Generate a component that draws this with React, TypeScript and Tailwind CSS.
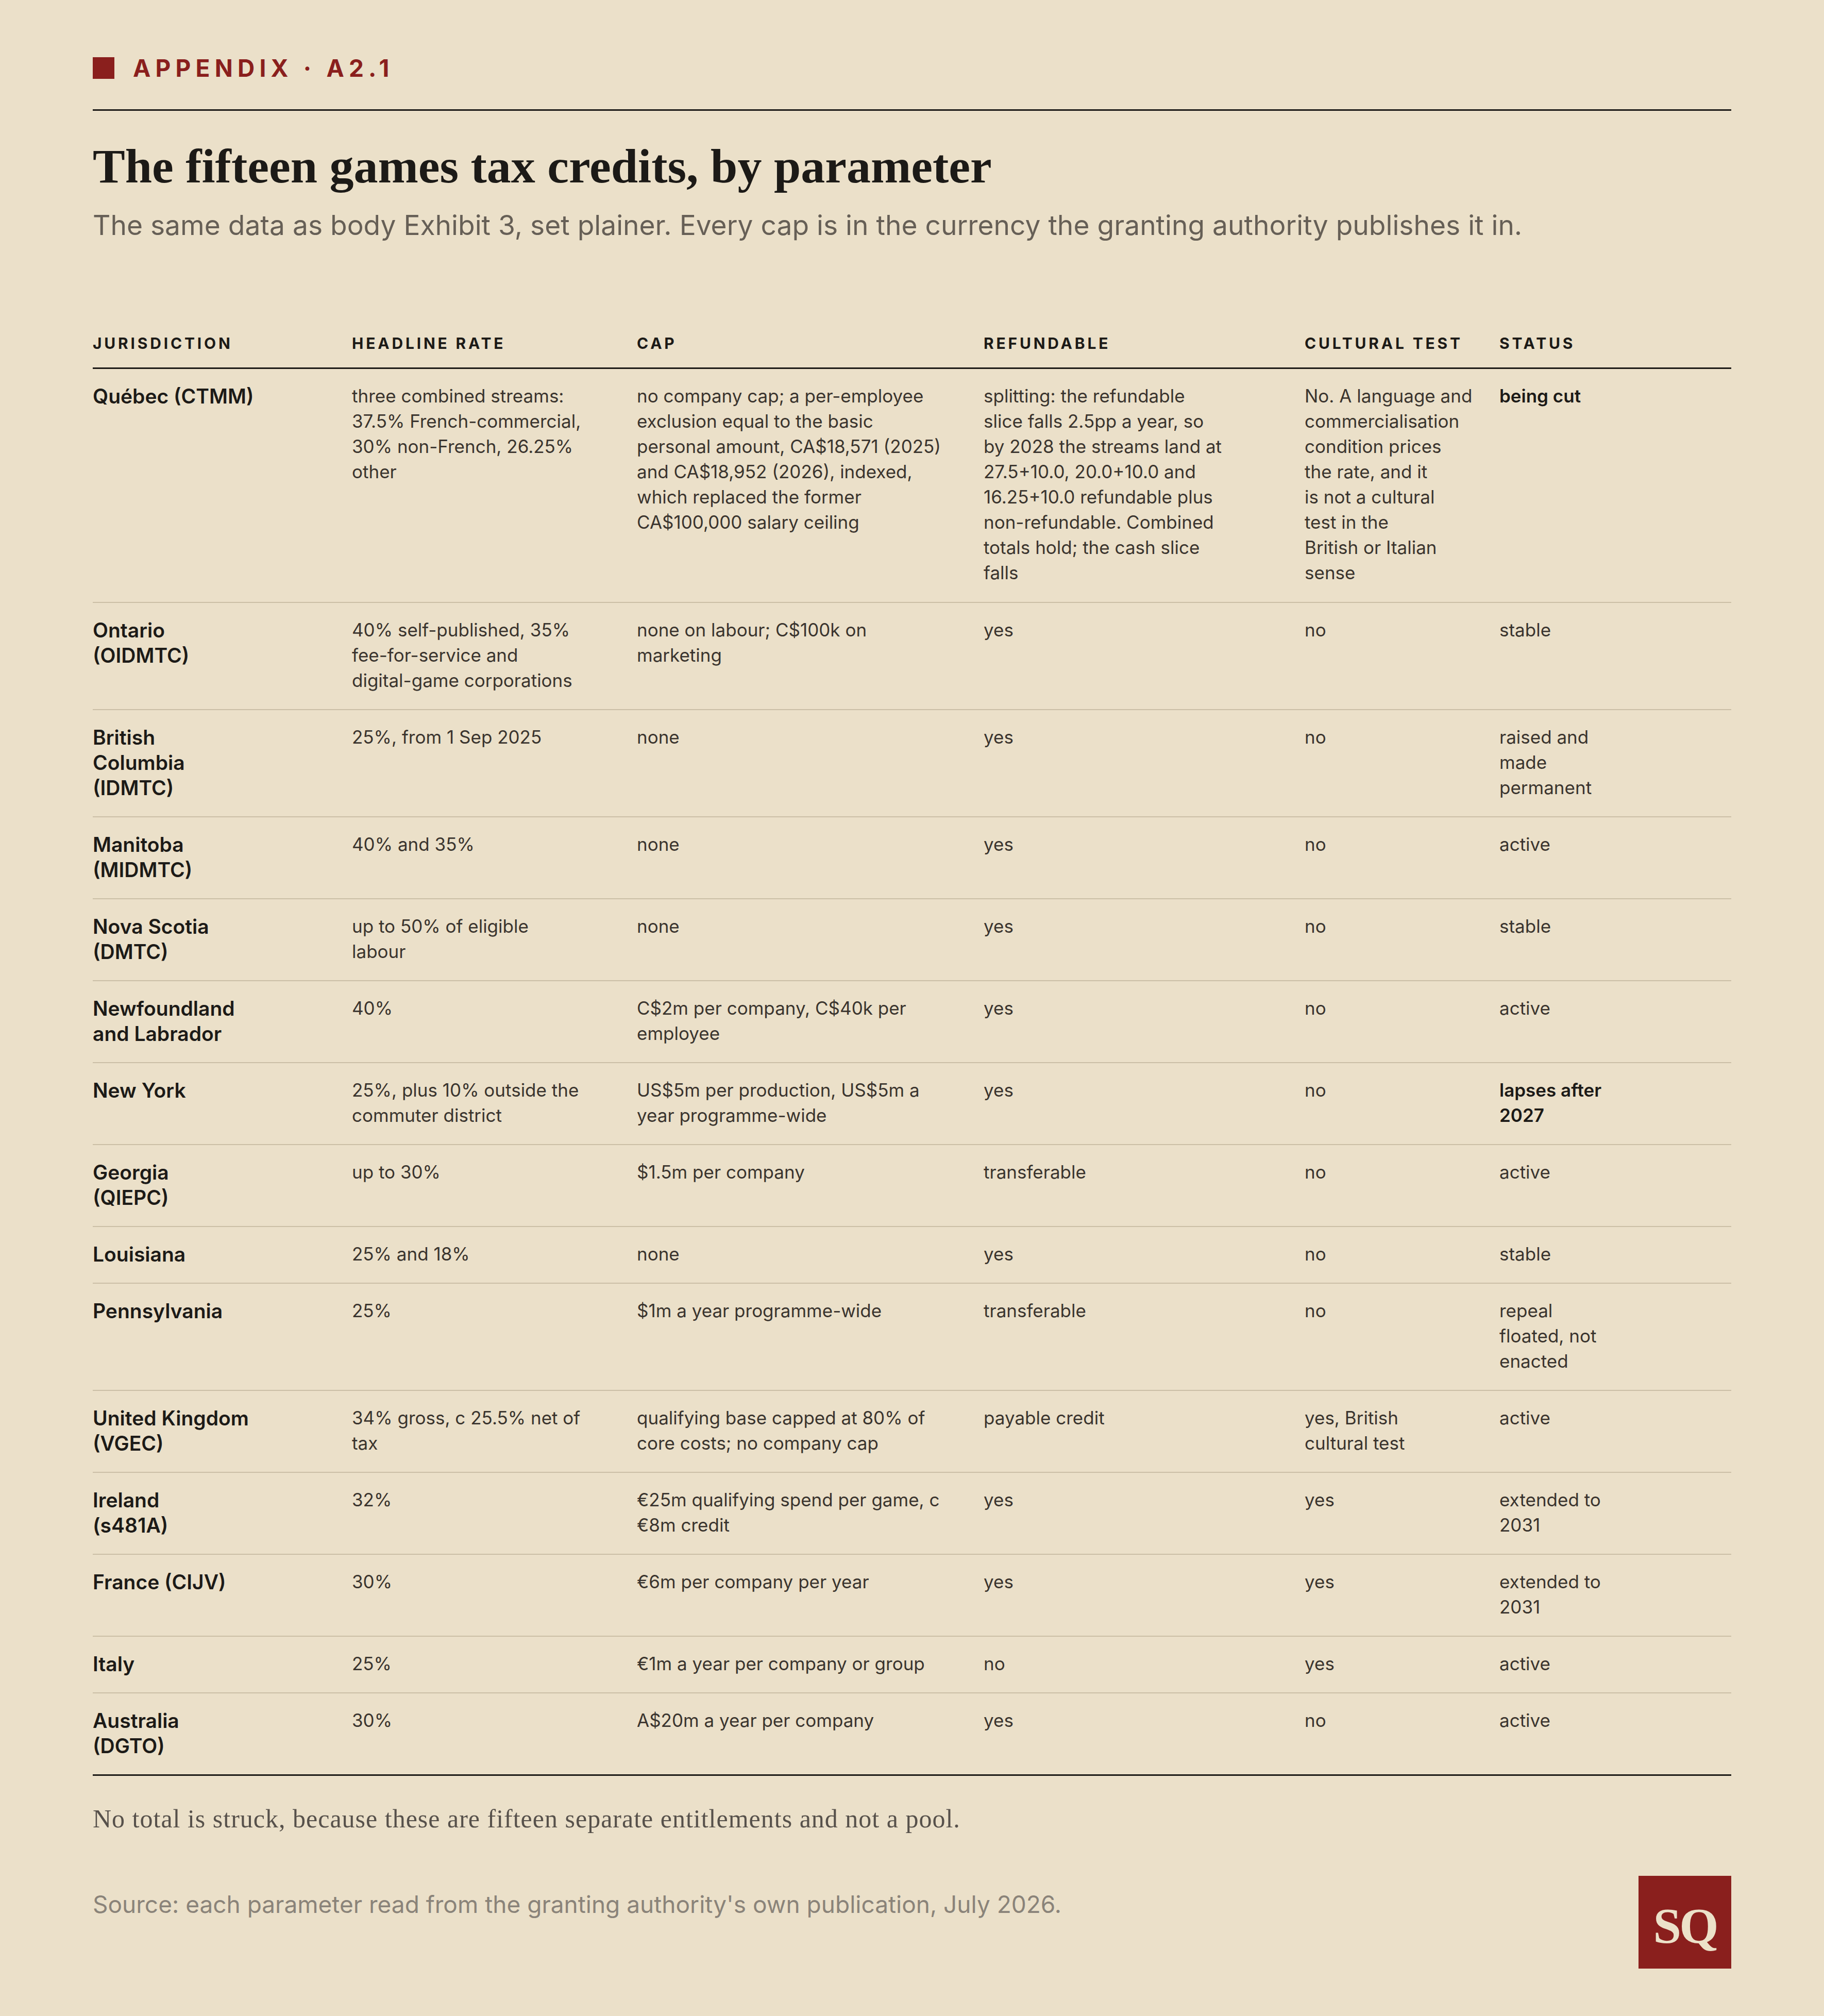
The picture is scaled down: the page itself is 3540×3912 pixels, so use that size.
import React from "react";

type Row = {
  j: string[];
  rate: string[];
  cap: string[];
  ref: string[];
  cult: string[];
  status: string[];
  boldStatus?: boolean;
};

const rows: Row[] = [
  {
    j: ["Québec (CTMM)"],
    rate: ["three combined streams:", "37.5% French-commercial,", "30% non-French, 26.25%", "other"],
    cap: [
      "no company cap; a per-employee",
      "exclusion equal to the basic",
      "personal amount, CA$18,571 (2025)",
      "and CA$18,952 (2026), indexed,",
      "which replaced the former",
      "CA$100,000 salary ceiling",
    ],
    ref: [
      "splitting: the refundable",
      "slice falls 2.5pp a year, so",
      "by 2028 the streams land at",
      "27.5+10.0, 20.0+10.0 and",
      "16.25+10.0 refundable plus",
      "non-refundable. Combined",
      "totals hold; the cash slice",
      "falls",
    ],
    cult: [
      "No. A language and",
      "commercialisation",
      "condition prices",
      "the rate, and it",
      "is not a cultural",
      "test in the",
      "British or Italian",
      "sense",
    ],
    status: ["being cut"],
    boldStatus: true,
  },
  {
    j: ["Ontario", "(OIDMTC)"],
    rate: ["40% self-published, 35%", "fee-for-service and", "digital-game corporations"],
    cap: ["none on labour; C$100k on", "marketing"],
    ref: ["yes"],
    cult: ["no"],
    status: ["stable"],
  },
  {
    j: ["British", "Columbia", "(IDMTC)"],
    rate: ["25%, from 1 Sep 2025"],
    cap: ["none"],
    ref: ["yes"],
    cult: ["no"],
    status: ["raised and", "made", "permanent"],
  },
  {
    j: ["Manitoba", "(MIDMTC)"],
    rate: ["40% and 35%"],
    cap: ["none"],
    ref: ["yes"],
    cult: ["no"],
    status: ["active"],
  },
  {
    j: ["Nova Scotia", "(DMTC)"],
    rate: ["up to 50% of eligible", "labour"],
    cap: ["none"],
    ref: ["yes"],
    cult: ["no"],
    status: ["stable"],
  },
  {
    j: ["Newfoundland", "and Labrador"],
    rate: ["40%"],
    cap: ["C$2m per company, C$40k per", "employee"],
    ref: ["yes"],
    cult: ["no"],
    status: ["active"],
  },
  {
    j: ["New York"],
    rate: ["25%, plus 10% outside the", "commuter district"],
    cap: ["US$5m per production, US$5m a", "year programme-wide"],
    ref: ["yes"],
    cult: ["no"],
    status: ["lapses after", "2027"],
    boldStatus: true,
  },
  {
    j: ["Georgia", "(QIEPC)"],
    rate: ["up to 30%"],
    cap: ["$1.5m per company"],
    ref: ["transferable"],
    cult: ["no"],
    status: ["active"],
  },
  {
    j: ["Louisiana"],
    rate: ["25% and 18%"],
    cap: ["none"],
    ref: ["yes"],
    cult: ["no"],
    status: ["stable"],
  },
  {
    j: ["Pennsylvania"],
    rate: ["25%"],
    cap: ["$1m a year programme-wide"],
    ref: ["transferable"],
    cult: ["no"],
    status: ["repeal", "floated, not", "enacted"],
  },
  {
    j: ["United Kingdom", "(VGEC)"],
    rate: ["34% gross, c 25.5% net of", "tax"],
    cap: ["qualifying base capped at 80% of", "core costs; no company cap"],
    ref: ["payable credit"],
    cult: ["yes, British", "cultural test"],
    status: ["active"],
  },
  {
    j: ["Ireland", "(s481A)"],
    rate: ["32%"],
    cap: ["€25m qualifying spend per game, c", "€8m credit"],
    ref: ["yes"],
    cult: ["yes"],
    status: ["extended to", "2031"],
  },
  {
    j: ["France (CIJV)"],
    rate: ["30%"],
    cap: ["€6m per company per year"],
    ref: ["yes"],
    cult: ["yes"],
    status: ["extended to", "2031"],
  },
  {
    j: ["Italy"],
    rate: ["25%"],
    cap: ["€1m a year per company or group"],
    ref: ["no"],
    cult: ["yes"],
    status: ["active"],
  },
  {
    j: ["Australia", "(DGTO)"],
    rate: ["30%"],
    cap: ["A$20m a year per company"],
    ref: ["yes"],
    cult: ["no"],
    status: ["active"],
  },
];

const GRID = "grid grid-cols-[503px_553px_673px_623px_378px_450px]";

function Lines({ lines, className }: { lines: string[]; className?: string }) {
  return (
    <div className={className}>
      {lines.map((l, i) => (
        <span key={i} className="block whitespace-nowrap">
          {l}
        </span>
      ))}
    </div>
  );
}

export default function App() {
  return (
    <div className="min-h-[3912px] bg-[#ebe0c9] px-[180px] pt-[111px] pb-[90px] font-['Inter',sans-serif] text-[#1c1a17]">
      {/* Kicker */}
      <div className="flex items-center h-[42px]">
        <div className="w-[42px] h-[42px] bg-[#8a1f1d]" />
        <div className="ml-[36px] text-[46px] leading-[46px] font-bold tracking-[0.2em] text-[#8a1f1d]">
          APPENDIX · A2.1
        </div>
      </div>

      <div className="mt-[59px] border-t-[3px] border-[#1c1a17]" />

      {/* Title */}
      <h1 className="mt-[56px] font-['Liberation_Serif',serif] font-bold text-[94px] leading-[103px] text-[#1c1a17]">
        The fifteen games tax credits, by parameter
      </h1>
      <p className="mt-[29px] text-[53.3px] leading-[68px] text-[#665f56]">
        The same data as body Exhibit 3, set plainer. Every cap is in the currency the granting authority publishes it in.
      </p>

      {/* Table */}
      <div className="mt-[177px]">
        <div
          className={`${GRID} pb-[29px] border-b-[3px] border-[#1c1a17] text-[30px] leading-[36px] font-bold tracking-[0.16em] text-[#1c1a17]`}
        >
          <div>JURISDICTION</div>
          <div>HEADLINE RATE</div>
          <div>CAP</div>
          <div>REFUNDABLE</div>
          <div>CULTURAL TEST</div>
          <div>STATUS</div>
        </div>

        {rows.map((r, i) => {
          const last = i === rows.length - 1;
          const first = i === 0;
          return (
            <div
              key={i}
              className={`${GRID} pt-[28px] ${first ? "pb-[32px]" : "pb-[31px]"} text-[35px] leading-[49px] text-[#3a342e] ${
                last ? "" : "border-b-2 border-[#cbbfa6]"
              }`}
            >
              <Lines lines={r.j} className="font-semibold text-[39px] text-[#1c1a17]" />
              <Lines lines={r.rate} />
              <Lines lines={r.cap} />
              <Lines lines={r.ref} />
              <Lines lines={r.cult} />
              <Lines
                lines={r.status}
                className={r.boldStatus ? "font-semibold text-[#1c1a17]" : ""}
              />
            </div>
          );
        })}
        <div className="border-t-[3px] border-[#1c1a17]" />
      </div>

      {/* Footnote */}
      <p className="mt-[51px] font-['Liberation_Serif',serif] text-[50px] leading-[64px] tracking-[0.02em] text-[#57514b]">
        No total is struck, because these are fifteen separate entitlements and not a pool.
      </p>

      {/* Footer */}
      <div className="mt-[79px] flex items-start justify-between">
        <p className="mt-[27px] text-[46px] leading-[56px] text-[#8a8379]">
          Source: each parameter read from the granting authority's own publication, July 2026.
        </p>
        <div className="w-[180px] h-[180px] bg-[#8a1f1d] flex items-center justify-center pt-[14px]">
          <span className="font-['Liberation_Serif',serif] font-bold text-[98px] leading-[98px] tracking-[-0.04em] text-[#ece1c9]">
            SQ
          </span>
        </div>
      </div>
    </div>
  );
}
